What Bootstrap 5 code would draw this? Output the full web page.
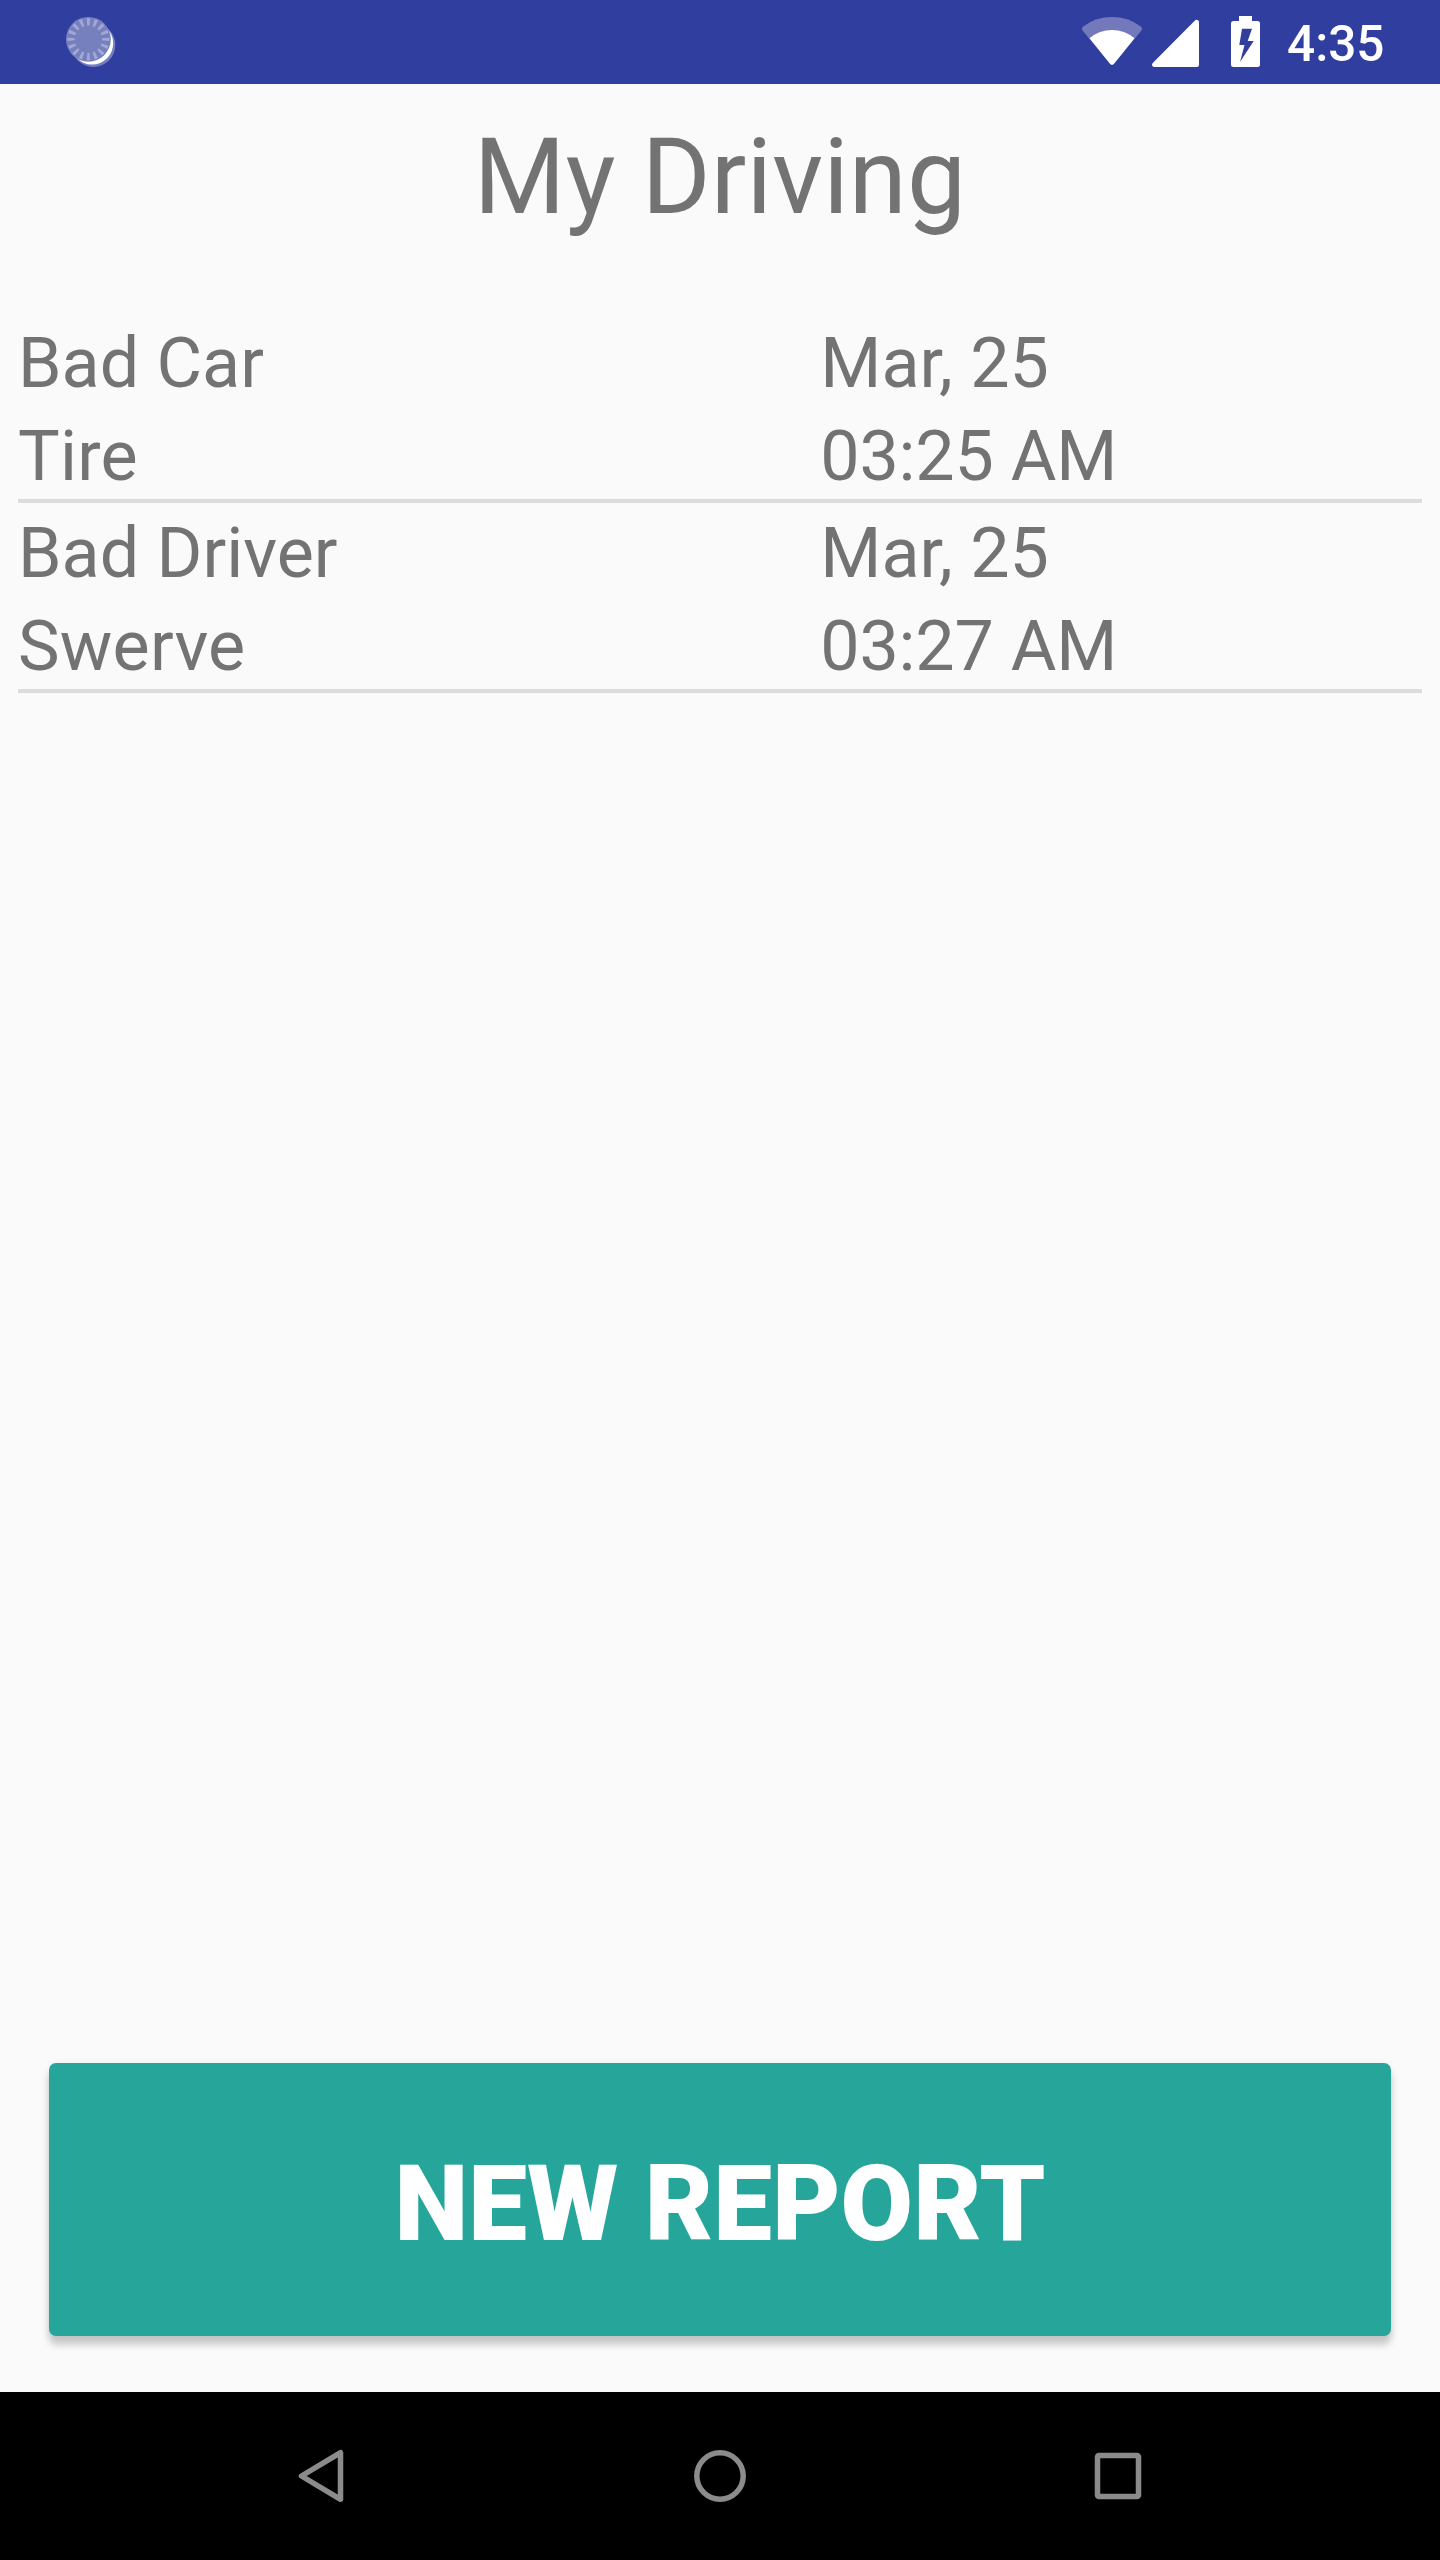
<!DOCTYPE html>
<html lang="en">
<head>
<meta charset="utf-8">
<meta name="viewport" content="width=device-width, initial-scale=1">
<title>My Driving</title>
<link href="https://cdn.jsdelivr.net/npm/bootstrap@5.3.0/dist/css/bootstrap.min.css" rel="stylesheet">
<style>
  body { background: #fafafa; font-family: Roboto, sans-serif; color: #737373; height: 2560px; overflow: hidden; }
  svg { display: block; flex: none; }
  .status-bar { height: 84px; background: #303f9f; padding: 0 54px 0 66px; }
  .clock { font-size: 49.5px; line-height: 58px; font-weight: 500; color: #fff; margin: 15px 0 0 25px; width: 99px; white-space: nowrap; }
  .screen-title { font-size: 105px; line-height: 123px; font-weight: 400; margin: 32px 0 74px; color: #737373; letter-spacing: .15px; }
  .report-list { margin: 0 18px; }
  .report { height: 190px; padding-top: 9px; border-bottom: 4px solid #dcdcdc; font-size: 70px; line-height: 82px; }
  .report-kind { flex: 4 1 0; }
  .report-time { flex: 3 1 0; }
  .report-kind span:last-child { letter-spacing: .2px; }
  .report-time span:last-child { letter-spacing: -.2px; }
  .line-gap { gap: 11px; }
  .btn-report { margin: 0 49px 56px; height: 273px; padding: 10px 0 0; border: 0; border-radius: 7px; background: #26a69a; color: #fff;
    font-size: 105px; line-height: 123px; font-weight: 900; letter-spacing: .1px; box-shadow: 0 9px 7px rgba(0,0,0,.18), 0 2px 10px rgba(0,0,0,.08); }
  .btn-report:hover { background: #26a69a; color: #fff; }
  .nav-keys { height: 168px; background: #000; }
</style>
<script src="https://cdn.jsdelivr.net/npm/bootstrap@5.3.0/dist/js/bootstrap.bundle.min.js" defer></script>
</head>
<body class="d-flex flex-column">
  <header class="status-bar d-flex align-items-start flex-shrink-0">
    <svg width="50" height="84" viewBox="66 0 50 84">
      <circle cx="93.3" cy="45" r="22" fill="#7680be"/>
      <circle cx="92" cy="43.3" r="21.2" fill="#fff"/>
      <circle cx="88.4" cy="39.3" r="22.4" fill="#7680be"/>
      <circle cx="88.4" cy="39.3" r="17.4" fill="none" stroke="#a1a8d3" stroke-width="7.4" pathLength="160" stroke-dasharray="4.2 5.8" stroke-dashoffset="2.1"/>
    </svg>
    <svg class="ms-auto" width="62" height="84" viewBox="1081 0 62 84">
      <path d="M1083.2 26.4Q1096 17 1112 17T1140.8 26.4Q1143 28.4 1141.2 30.8L1114 63.8Q1112 66 1110 63.8L1082.8 30.8Q1081 28.4 1083.2 26.4Z" fill="#7479bc"/>
      <path d="M1089.5 38.2Q1099.5 30 1112 30T1134.5 38.2L1114 63.8Q1112 66 1110 63.8Z" fill="#fff"/>
    </svg>
    <svg width="119" height="84" viewBox="1143 0 119 84">
      <path d="M1153 62.7L1194.7 20.7Q1196 19.5 1197.5 20T1199 22V64.5Q1199 67 1196.5 67H1154Q1152 66.6 1152 65Q1151.8 64 1153 62.7Z" fill="#fff"/>
      <path fill-rule="evenodd" d="M1239 16H1252V21H1257.5Q1260 21 1260 23.5V64.5Q1260 67 1257.5 67H1233.5Q1231 67 1231 64.5V23.5Q1231 21 1233.5 21H1239ZM1242 28.7L1239.3 45H1244.5L1240 62L1253.7 41H1247.7L1252 28.7Z" fill="#fff"/>
    </svg>
    <div class="clock">4:35</div>
  </header>

  <main class="d-flex flex-column flex-grow-1">
    <h1 class="screen-title text-center">My Driving</h1>
    <div class="report-list">
      <div class="report d-flex">
        <div class="report-kind d-flex flex-column line-gap"><span>Bad Car</span><span>Tire</span></div>
        <div class="report-time d-flex flex-column line-gap"><span>Mar, 25</span><span>03:25 AM</span></div>
      </div>
      <div class="report d-flex">
        <div class="report-kind d-flex flex-column line-gap"><span>Bad Driver</span><span>Swerve</span></div>
        <div class="report-time d-flex flex-column line-gap"><span>Mar, 25</span><span>03:27 AM</span></div>
      </div>
    </div>
    <button type="button" class="btn btn-report mt-auto text-uppercase">New Report</button>
  </main>

  <nav class="nav-keys d-flex justify-content-center align-items-center flex-shrink-0">
    <svg width="844" height="60" viewBox="298 0 844 60" fill="none" stroke="#8b8b8b" stroke-width="5.5">
      <path d="M301.5 30L340.5 6.7V53.3Z" stroke-linejoin="round"/>
      <circle cx="720" cy="30" r="23.2"/>
      <rect x="1097.5" y="9.5" width="41" height="41" rx="1.5"/>
    </svg>
  </nav>
</body>
</html>
